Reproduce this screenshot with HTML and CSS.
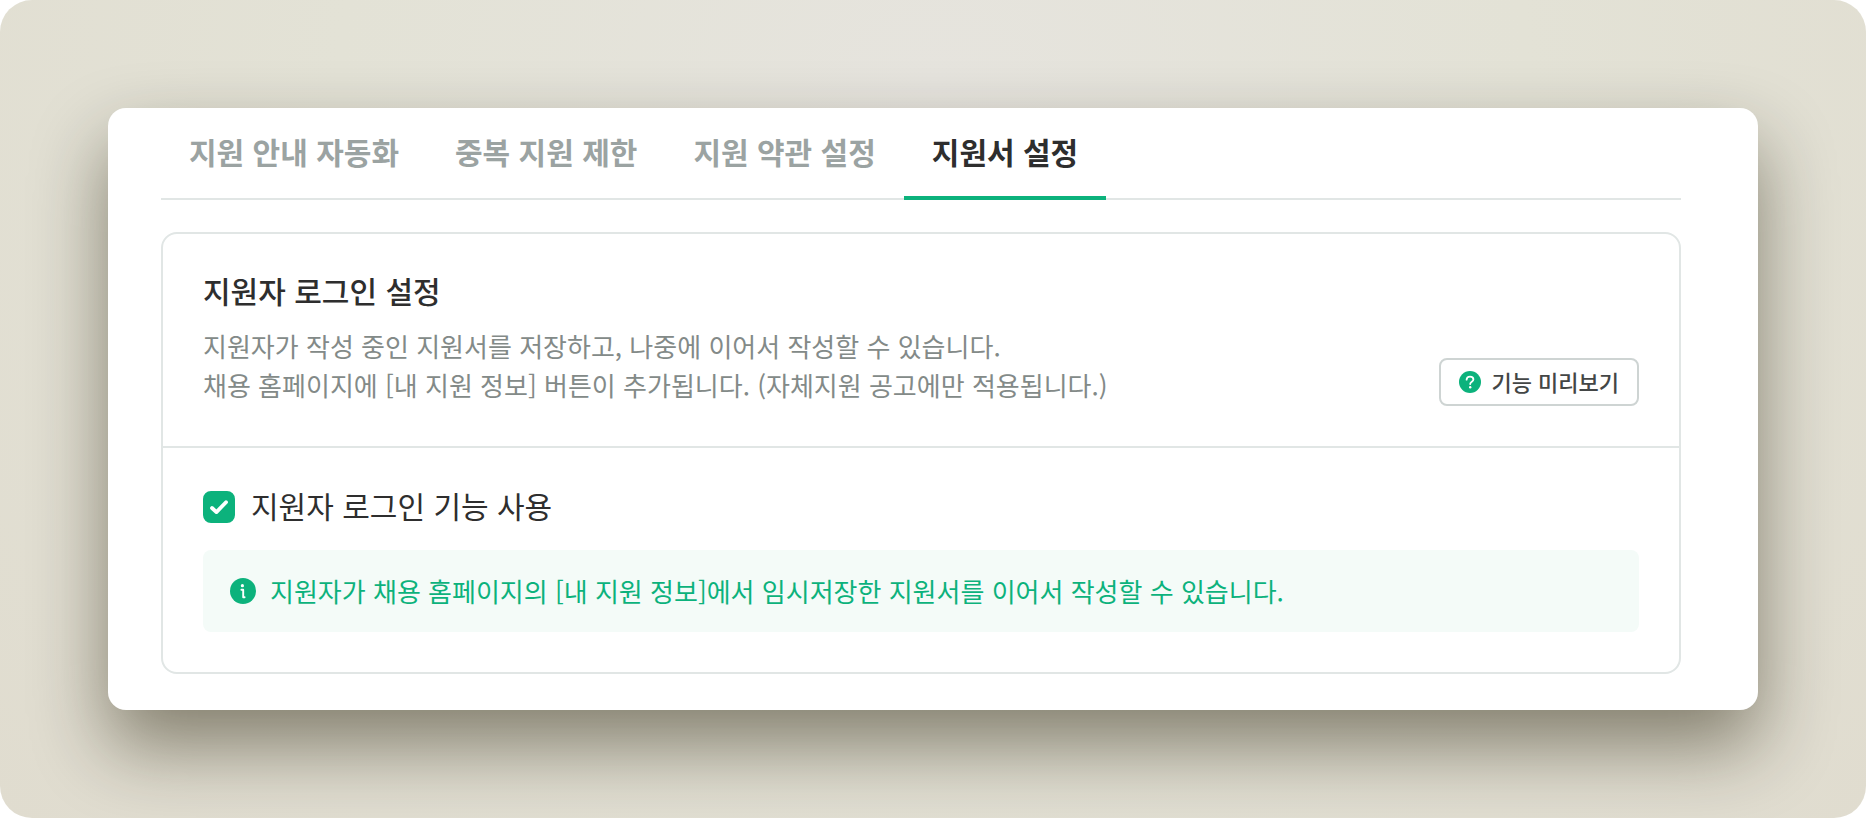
FILE: index.html
```html
<!DOCTYPE html>
<html lang="ko">
<head>
<meta charset="utf-8">
<meta name="viewport" content="width=device-width, initial-scale=1">
<title>지원서 설정</title>
<link rel="stylesheet" href="styles.css">
</head>
<body>
<div class="stage">
  <main class="card">
    <nav class="tabs">
      <a class="tab" href="#automation">지원 안내 자동화</a>
      <a class="tab" href="#duplicate">중복 지원 제한</a>
      <a class="tab" href="#terms">지원 약관 설정</a>
      <a class="tab tab-active" href="#form" aria-current="page">지원서 설정</a>
    </nav>
    <section class="panel">
      <header class="panel-head">
        <div class="intro">
          <h1 class="title">지원자 로그인 설정</h1>
          <p class="desc">지원자가 작성 중인 지원서를 저장하고, 나중에 이어서 작성할 수 있습니다.<br>채용 홈페이지에 [내 지원 정보] 버튼이 추가됩니다. (자체지원 공고에만 적용됩니다.)</p>
        </div>
        <button class="preview" type="button">
          <svg class="preview-icon" viewBox="0 0 22 22" aria-hidden="true">
            <circle cx="11" cy="11" r="11" fill="#0cb27c"/>
            <path d="M7.6 8.7C7.7 6.8 9.1 5.7 11 5.7s3.4 1.1 3.4 2.8c0 2.3-3.2 2.3-3.2 4.5" fill="none" stroke="#fff" stroke-width="1.8" stroke-linecap="round"/>
            <circle cx="11.2" cy="16.3" r="1.2" fill="#fff"/>
          </svg>
          <span class="preview-text">기능 미리보기</span>
        </button>
      </header>
      <div class="panel-body">
        <label class="option" for="login-enabled">
          <span class="check">
            <input class="check-input" type="checkbox" id="login-enabled" checked>
            <svg class="check-mark" viewBox="0 0 32 32" aria-hidden="true">
              <path d="M9 17l4.4 4.1L23 11.2" fill="none" stroke="#fff" stroke-width="3.8" stroke-linecap="round" stroke-linejoin="round"/>
            </svg>
          </span>
          <span class="option-text">지원자 로그인 기능 사용</span>
        </label>
        <div class="notice">
          <svg class="notice-icon" viewBox="0 0 26 26" aria-hidden="true">
            <circle cx="13" cy="13" r="13" fill="#0cb27c"/>
            <circle cx="12.4" cy="7.7" r="1.6" fill="#fff"/>
            <path d="M11.4 11.8h1.8v7.4h1.4" fill="none" stroke="#fff" stroke-width="1.9" stroke-linecap="round" stroke-linejoin="round"/>
          </svg>
          <p class="notice-text">지원자가 채용 홈페이지의 [내 지원 정보]에서 임시저장한 지원서를 이어서 작성할 수 있습니다.</p>
        </div>
      </div>
    </section>
  </main>
</div>
</body>
</html>
```
FILE: styles.css
```css
* {
  box-sizing: border-box;
}

body {
  margin: 0;
  background: #fff;
  font-family: "Noto Sans CJK KR", sans-serif;
  color: #2e2e2e;
}

.stage {
  min-height: 100vh;
  padding: 108px;
  overflow: hidden;
  border-radius: 32px;
  background: radial-gradient(ellipse at 50% 10%, #e6e4de 0%, #e3e2d6 45%, #e0dccf 100%);
}

.card {
  padding: 0 77px 36px 53px;
  border-radius: 18px;
  background: #fff;
  box-shadow: 0 36px 76px rgba(30, 24, 0, 0.48);
}

.tabs {
  display: flex;
  height: 92px;
  box-shadow: inset 0 -2px #e1e6e5;
}

.tab {
  display: flex;
  align-items: center;
  padding: 0 28px 2px;
  border-bottom: 4px solid transparent;
  font-size: 30px;
  font-weight: 700;
  color: #9ba3a2;
  text-decoration: none;
  white-space: nowrap;
}

.tab-active {
  border-bottom-color: #0cb27c;
  color: #2e2e2e;
}

.panel {
  margin-top: 32px;
  border: 2px solid #e1e6e5;
  border-radius: 16px;
}

.panel-head {
  display: flex;
  align-items: flex-end;
  justify-content: space-between;
  padding: 38px 40px 40px;
  border-bottom: 2px solid #e1e6e5;
}

.intro {
  padding-bottom: 2px;
}

.title {
  margin: 0 0 18px;
  font-size: 30px;
  font-weight: 500;
  line-height: 36px;
}

.desc {
  margin: 0;
  font-size: 26px;
  line-height: 39px;
  color: #838a88;
}

.preview {
  display: flex;
  align-items: center;
  gap: 10px;
  height: 48px;
  padding: 0 18px;
  border: 2px solid #ced4d3;
  border-radius: 8px;
  background: #fff;
  font-family: inherit;
  font-size: 22px;
  font-weight: 500;
  line-height: 32px;
  color: #434646;
  white-space: nowrap;
}

.preview-text {
  padding-bottom: 2px;
}

.preview-icon {
  width: 22px;
  height: 22px;
}

.panel-body {
  padding: 40px;
}

.option {
  display: flex;
  align-items: center;
  gap: 16px;
  font-size: 30px;
  line-height: 34px;
}

.option-text {
  padding-bottom: 4px;
}

.check {
  display: grid;
}

.check-input,
.check-mark {
  grid-area: 1 / 1;
  width: 32px;
  height: 32px;
  margin: 0;
}

.check-input {
  appearance: none;
  border: 2px solid #ced4d3;
  border-radius: 8px;
}

.check-input:checked {
  border-color: #0cb27c;
  background: #0cb27c;
}

.check-mark {
  pointer-events: none;
}

.notice {
  display: flex;
  align-items: center;
  gap: 14px;
  min-height: 82px;
  margin-top: 24px;
  padding: 20px 27px;
  border-radius: 8px;
  background: #f4fbf8;
  color: #0cb27c;
}

.notice-icon {
  flex: none;
  width: 26px;
  height: 26px;
}

.notice-text {
  margin: 0;
  padding-bottom: 2px;
  font-size: 26px;
  line-height: 39px;
}
```
